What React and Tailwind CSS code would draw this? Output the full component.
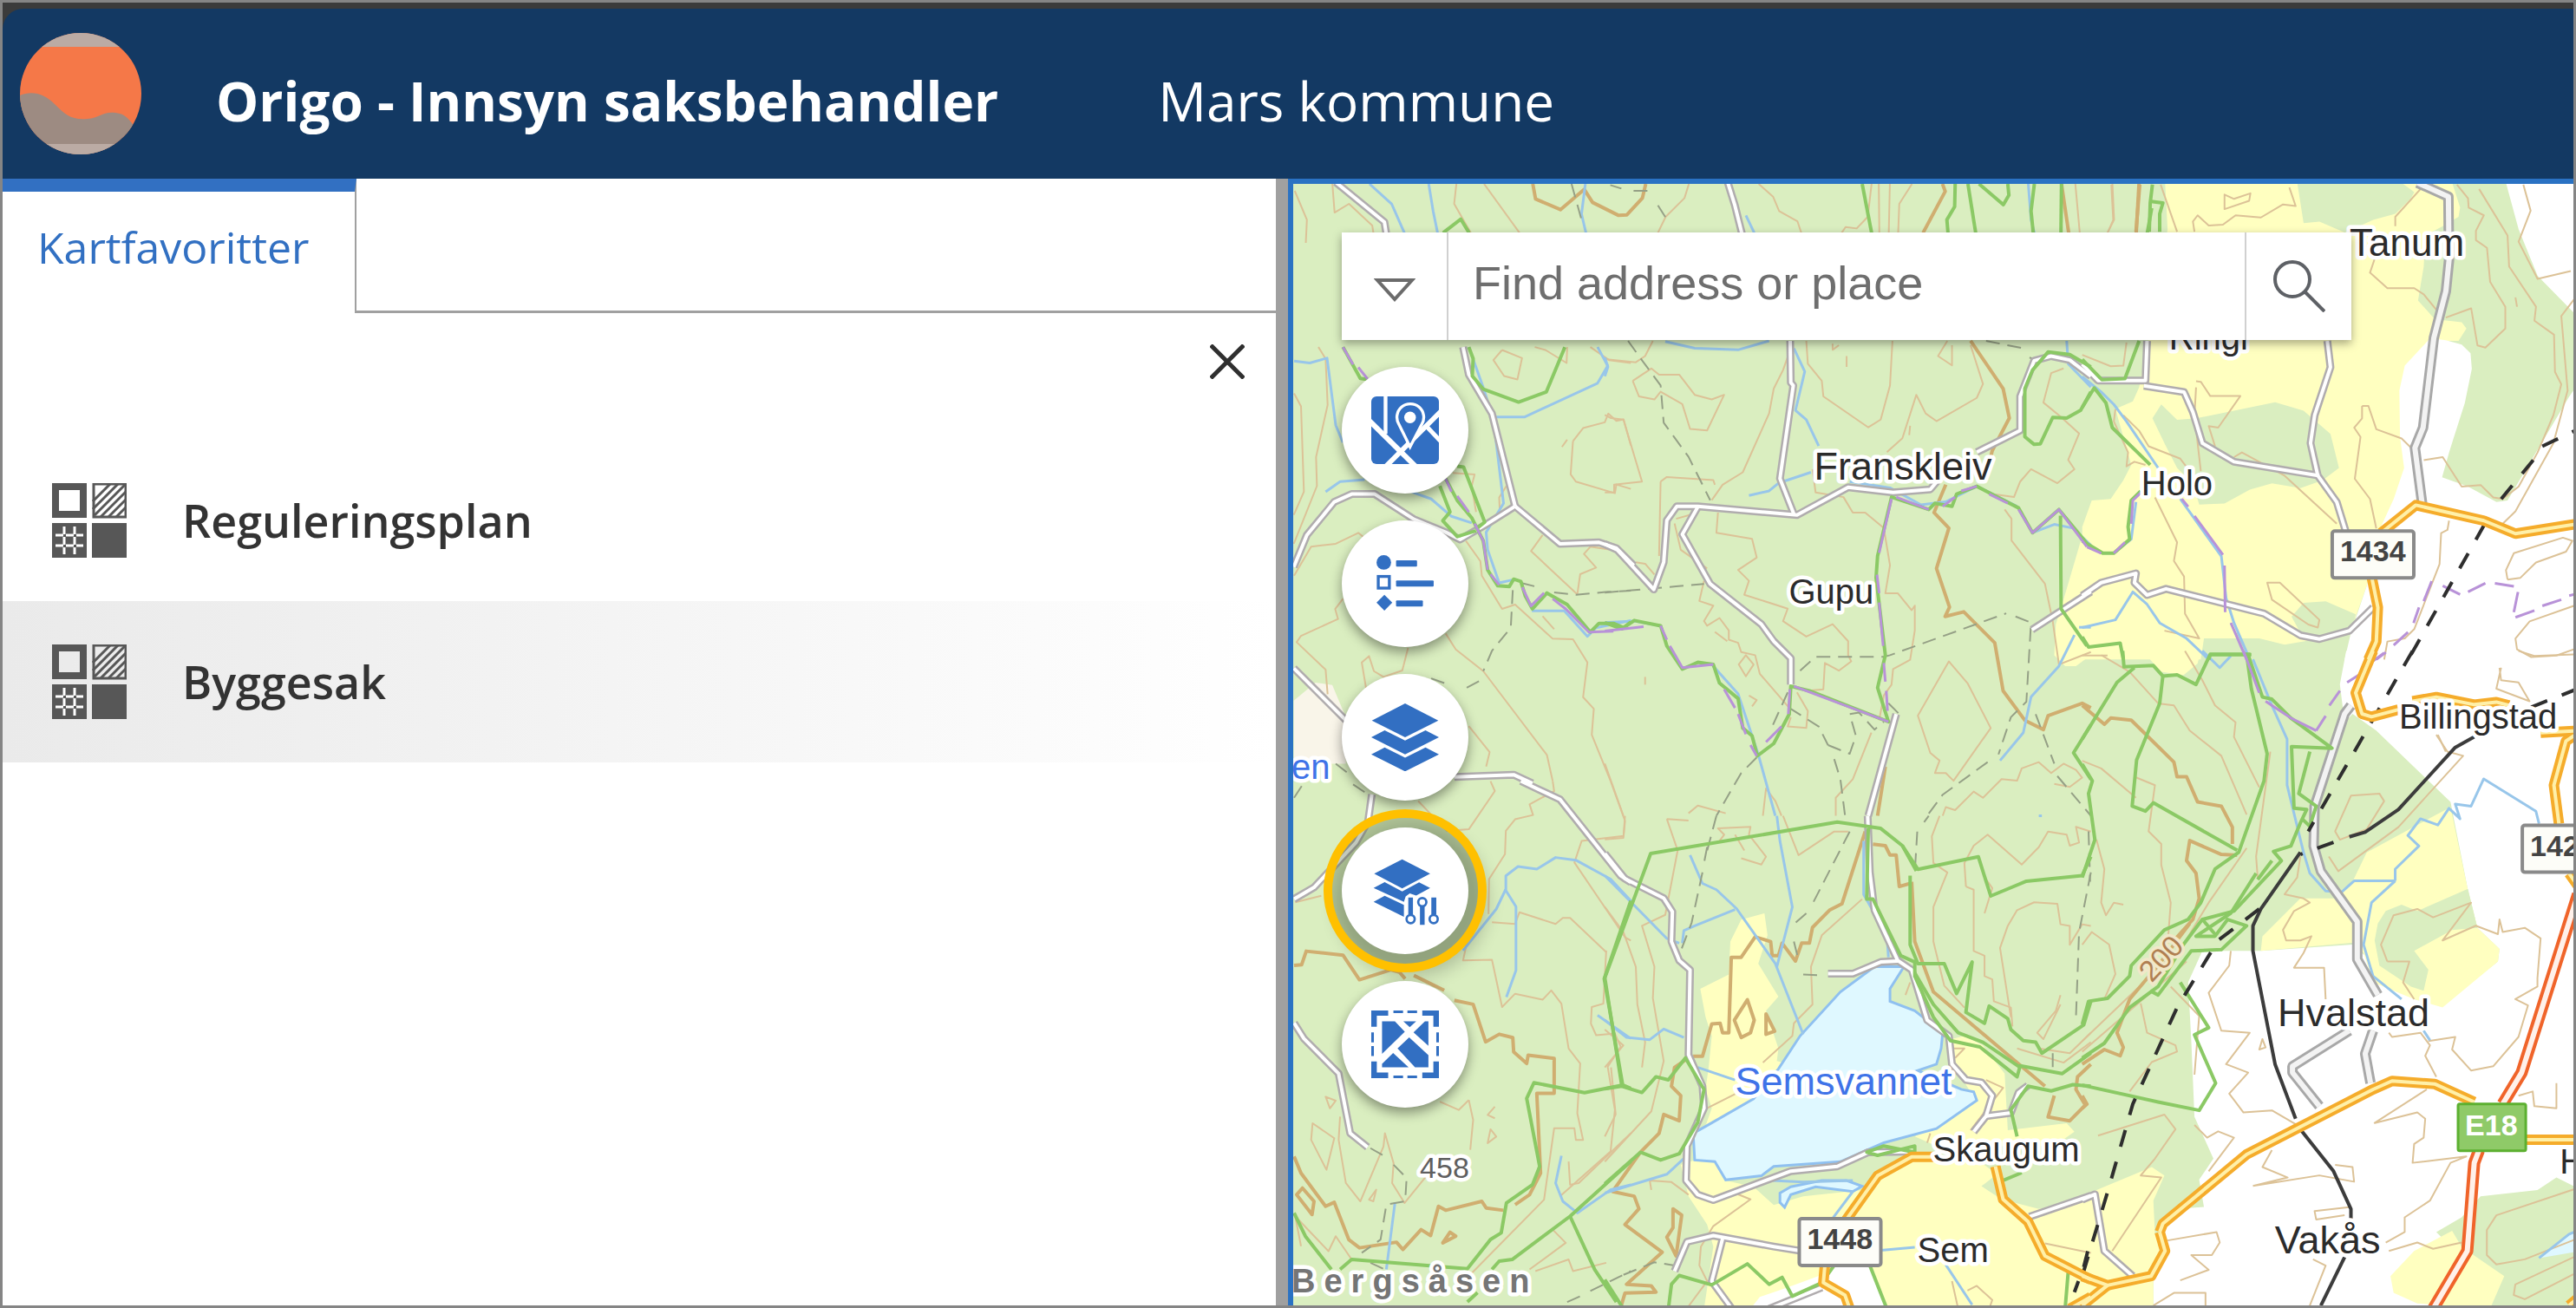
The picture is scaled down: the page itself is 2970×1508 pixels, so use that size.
import { useState } from 'react';

const GREEN = '#daeec0';
const YELLOW = '#ffffc0';
const WHITE = '#ffffff';
const WATER = '#dff8ff';

// Every tile has its own coordinate space and is placed on the map with a transform
const TILES = [
  {
    id: 'north',
    transform: 'translate(1480 200) scale(0.6378 0.3333)',
    areas: [],
    contours: [
      'M20 60 L42 160 40 240', 'M88 36 L92 135 118 105 160 180 165 240', 'M312 36 L308 105 338 205', 'M362 36 L426 205',
      'M732 36 L724 85 690 150 676 205', 'M858 36 L884 80 895 130 928 165 935 205', 'M1062 36 L1055 150 1035 190 1015 185 1008 205',
      'M1075 36 L1076 205', 'M1095 36 L1093 205', 'M1135 36 L1112 105 1110 205', 'M1430 36 L1438 205', 'M1497 36 L1500 160 1488 205',
    ],
    indexContours: ['M450 36 L455 88 500 125 543 55 558 100 605 145 620 143 648 85 654 36', 'M1190 36 L1195 62 1155 205', 'M1405 36 L1418 205', 'M1545 36 L1540 205'],
    streams: ['M155 36 L195 105 218 205', 'M262 36 L270 130 278 205', 'M545 36 L538 140 546 205', 'M835 145 L850 205', 'M1345 36 L1350 160 1356 205'],
    borders: ['M288 205 L320 158 335 205', 'M1045 36 L1062 205', 'M1213 36 L1212 115 1198 160 1200 205', 'M1236 36 L1250 205', 'M1256 36 L1300 108 1310 75 1308 36', 'M1356 36 L1350 130 1354 205', 'M1405 36 L1404 205', 'M1568 120 L1560 205'],
    paths: ['M520 36 L538 160', 'M590 40 L610 52 M632 60 L664 60', 'M676 110 L696 170'],
    roads: ['M94 30 L182 168 188 240', 'M802 30 L815 110 832 240'],
  },
  {
    id: 'northwest',
    transform: 'translate(1480 400) scale(0.3333)',
    areas: [{ d: 'M35 1222 L110 1160 168 1168 215 1280 215 1440 35 1440Z', fill: '#f9f5e9' }],
    contours: [
      'M36 160 L60 205 70 500 35 580', 'M120 0 L145 40 152 200 112 380 115 480 35 680', 'M36 790 L95 690 180 680 258 642 280 660',
      'M205 870 L178 905 188 940 60 998 45 1020 145 1115 152 1200', 'M285 1180 L270 1090 295 1068 312 1120 345 1140 410 1118 430 1040',
      'M755 10 L725 45 762 100 808 112 824 38 755 10', 'M868 0 L905 10 978 55 980 0', 'M1060 0 L1125 45 1200 55',
      'M1000 325 L1035 280 1110 260 1122 230 1150 255 1175 250 1200 340', 'M1000 325 L992 440 1010 465 1145 505 1150 475 1200 490', 'M980 320 L962 345',
      'M895 650 L855 705 1015 855 1025 785 1080 762 1038 715 1060 690 1130 700', 'M630 670 L680 740 685 790 755 905 800 890 930 1008 1000 1010 1050 1090 1035 1210 1072 1250 1065 1340 1130 1500',
      'M560 990 L595 1045 690 1120 910 1410 930 1500', 'M640 1310 L712 1400 700 1450', 'M585 435 L660 440 650 480 665 570', 'M770 480 L745 520 748 590', 'M895 930 L935 975',
    ],
    indexContours: [],
    streams: ['M36 48 L90 55 150 38 180 270 205 330', 'M145 500 L195 465 280 458', 'M730 242 L832 242 1085 125 1120 65 1085 0', 'M640 0 L690 140 725 250 760 540 700 640 705 700 745 815 790 805', 'M440 500 L510 525 580 585 650 608', 'M858 912 L970 912 1050 1000 1080 970 1200 945'],
    borders: [
      'M205 0 L265 108 290 112', 'M640 0 L655 40 652 100 690 145 812 190 908 155 972 0', 'M560 455 L600 530 650 590 690 670 705 770 740 825 780 828 795 802 820 810 835 860 860 905 910 850 980 890 1060 985 1090 955 1140 955 1175 970 1200 950',
      'M540 480 L575 570 550 600 600 655 665 635', 'M600 412 L622 415 695 605 670 625',
    ],
    municipal: ['M205 0 L240 60 M258 70 L290 110', 'M560 455 L580 500 M600 515 L640 570 M660 610 L690 670 705 770 M715 785 L745 822 M825 830 L855 895 900 850 M930 870 L975 905 1055 985 1140 982'],
    paths: ['M820 815 L880 830 M935 848 L1010 856 1120 846 1200 842', 'M792 840 L785 970 720 1050 690 1120 M675 1155 L610 1190', 'M510 1145 L565 1165', 'M180 1440 L225 1475'],
    roads: ['M620 0 L640 95 720 230 800 550', 'M800 550 L955 680 1090 675 1150 695 1210 755', 'M800 550 L705 610 610 665 560 640 450 595 315 508 235 508 175 535 80 650 35 760', 'M35 1110 L215 1290', 'M590 1486 L795 1478 860 1508'],
  },
  {
    id: 'southwest',
    transform: 'translate(1480 900) scale(0.3333 0.3827)',
    areas: [],
    contours: [
      'M465 60 L520 110 565 150 640 145 730 30 715 0', 'M930 0 L935 30 850 70 862 102 800 115 768 150 765 220 710 295 708 400', 'M1130 0 L1180 120 1175 165 1030 180 1005 245 1180 470 1200 480',
      'M720 425 L800 430 815 395 940 430 965 412 990 412 1115 515', 'M640 460 L620 540 720 538 755 680 800 640 895 658 925 630 960 670 985 805 1025 850 1015 1000 1030 1060 1035 1080 1010 1080 1005 1045 935 1045 900 1260 640 1490',
      'M40 365 L130 345', 'M1115 510 L1105 670 1065 680 1062 730 1080 765 1145 760 1165 800 1120 860 1145 990 1130 1115 955 1250', 'M195 1010 L190 1080 215 1210 265 1265 345 1100 350 1060 380 1150 375 1210 418 1270 520 1160',
      'M145 950 L180 962 160 985Z', 'M100 1030 L175 1075 148 1170 95 1080Z', 'M640 960 L605 990 540 965', 'M640 960 L655 1020 645 1110', 'M705 1090 L715 1048 735 1070Z M730 980 L705 1005 730 1015', 'M295 1260 L320 1230 310 1265Z',
      'M985 1145 L990 1215 1020 1210 1200 1060', 'M60 1400 L40 1310 155 1415 180 1370 235 1440', 'M850 1470 L975 1390 930 1350', 'M870 1475 L985 1440 1000 1475 1115 1450',
    ],
    indexContours: [
      'M36 555 L62 553 78 512 205 524 262 598 370 568 400 575 420 595', 'M450 585 L555 630 M590 660 L655 672 698 785 745 762 792 772 795 815 840 850 845 825 935 835 935 940 875 940 888 1180 850 1245 800 1275',
      'M36 1130 L60 1180 145 1280 175 1268 225 1380 262 1405 390 1388 412 1410 475 1350 508 1368 535 1280 560 1292 685 1265 700 1285 760 1292', 'M45 1245 L65 1225 105 1265 98 1305Z', 'M550 1390 L575 1358 595 1370Z',
    ],
    streams: ['M620 510 L735 385 768 325 768 285 810 257 875 265 940 230 1010 238 1130 295 1200 360', 'M765 325 L803 378 803 570 770 650', 'M385 1268 L355 1470', 'M960 1128 L940 1210 965 1265 1015 1300 1130 1230 1200 1215', 'M1085 705 L1200 775'],
    borders: ['M1200 360 L1108 595 1172 915 1200 925', 'M1172 915 L1040 938 865 908 840 955 885 1160 860 1215 770 1270 752 1360 715 1380 635 1468 235 1440 195 1470', 'M36 1300 L75 1370 165 1470', 'M720 1470 L745 1445 790 1440 990 1310 1200 1145', 'M990 1310 L1075 1470 1150 1568', 'M635 1568 L670 1540'],
    paths: ['M240 10 L300 45', 'M36 50 L70 5', 'M300 1105 L350 1130 M380 1155 L425 1195 420 1265 355 1275 335 1380 270 1420', 'M1060 1535 L1200 1475', 'M980 1568 L1040 1545', 'M300 1450 L350 1470'],
    roads: ['M305 40 L292 120 250 185 105 320 36 355', 'M36 728 L70 775 190 880 230 1060 290 1102', 'M820 0 L955 55 1165 285 1200 305'],
  },
  {
    id: 'centre',
    transform: 'translate(1850 380) scale(0.3571)',
    areas: [{ d: 'M1568 565 L1530 700 1480 870 1455 950 1450 1050 1485 1085 1520 1085 1575 1045Z', fill: YELLOW }],
    contours: [
      'M155 36 L130 85 100 105 0 95', 'M90 165 L150 125 175 145 240 145 290 210 345 225 385 210 330 325 275 320 250 240 180 200 160 225 110 215 90 165', 'M0 275 L20 285 60 290 120 490 30 500 30 525 0 525',
      'M600 60 L575 130 545 190 530 270 445 460 380 500 345 550', 'M180 490 L200 475 350 485 355 500 M180 490 L175 730', 'M650 36 L655 110 700 165 705 215 850 315 890 290 920 180 928 36', 'M1105 36 L1075 85 1120 115 1120 50',
      'M1180 50 L1220 175 1200 220 1070 295 1035 270 1005 210 960 350 910 395', 'M780 85 L780 120', 'M985 310 L982 340', 'M670 450 L680 525 770 540 800 590 840 590 900 640 920 760 905 850 945 850 990 905 1000 890 1000 970 985 1065 930 1095 925 1145 900 1180 885 1260',
      'M365 590 L360 655 475 675 490 735 430 775 465 810 450 855 560 890 590 900 575 940 650 990 735 950 785 1005 785 1050 795 1070 755 1100 710 1075 705 1160 650 1165', 'M320 810 L305 875 350 890 320 940 330 955 370 930 400 970 400 1000 430 1010 440 1040 485 1050 500 1110 595 1220',
      'M455 1050 L480 1080 455 1118 432 1080Z', 'M355 975 L395 1005', 'M465 1180 L490 1195 475 1215', 'M130 1120 L130 1145', 'M1110 1070 L1170 1140 1245 1285 1125 1455 1100 1430 1065 1430 1080 1390 1050 1365 1010 1245Z',
      'M1090 1568 L1100 1540 1130 1550 1190 1490 1220 1510 1280 1450 1330 1455 1345 1415 1400 1395 1440 1430 1480 1400 1520 1420 1540 1445 1500 1475 1450 1465', 'M860 1300 L800 1450 745 1510 745 1568',
      'M1480 125 L1440 140 1415 235 1470 280 1530 335 1495 420 1515 450 1460 495 1375 450 1340 490 1320 540 1250 530', 'M1290 580 L1312 610 1312 680 1420 820 1445 940 1465 1080 1568 1040', 'M230 610 L300 590 M225 625 L245 710 330 770', 'M100 750 L130 755 160 790', 'M0 1400 L60 1568', 'M270 1560 L300 1535 390 1560', 'M510 1568 L520 1480 550 1520 570 1568', 'M600 1250 L590 1280 650 1285 655 1230 620 1170', 'M735 45 L735 65 755 50',
    ],
    indexContours: ['M1180 36 L1285 190 1305 285 1250 390 1245 410', 'M1100 500 L1062 590 1110 640 1070 770 1112 895 1098 925 1158 910 1258 1010 1285 1165 1355 1260 1415 1290 1430 1245 1540 1205 1568 1220', 'M905 1410 L880 1568'],
    streams: ['M195 38 L290 60 430 65 530 36', 'M610 60 L645 135 615 260 650 290 690 375', 'M465 535 L530 520 560 495 665 460', 'M0 945 L95 940 180 955', 'M345 1080 L430 1175 495 1370 550 1568', 'M790 490 L920 510 1020 565 1100 555 1200 505 1330 570', 'M1380 655 L1450 628 1510 640 1568 695', 'M1490 36 L1495 110 1568 185', 'M1568 960 L1530 960', 'M1515 985 L1465 1085 1375 1185 1350 1300 1275 1390', 'M0 90 L10 120 0 150'],
    borders: [
      'M0 945 L55 965 95 938 180 955 200 1020 250 1095 300 1073 350 1080 370 1140 430 1190 445 1285 475 1310 492 1375 545 1335 595 1240 600 1150 660 1165 915 1265 880 1155 905 1050 875 800 880 730 925 540 1045 580 1065 560 1120 570 1135 530 1200 505 1335 575 1380 655 1465 580 1568 705',
      'M1568 120 L1500 80 1430 72 1380 130 1355 190 1355 345 1385 370 1405 368 1445 283 1490 285 1535 260 1568 200', 'M1470 600 L1472 900 1555 1020', 'M1568 1275 L1512 1365 1568 1450',
    ],
    municipal: ['M0 972 L125 958 M180 955 L200 1000 M210 1020 L250 1090 350 1080 M385 1160 L420 1220 M430 1240 L455 1305 M470 1340 L490 1375 M520 1330 L570 1280 M592 1240 L597 1160 M610 1150 L915 1265 M912 1230 L908 1165 M905 1135 L900 1075 M898 1020 L885 880 M885 850 L878 790 M885 720 L925 545 M940 540 L1045 580 M1090 570 L1130 540 M1150 520 L1200 505 M1240 530 L1300 560 M1335 580 L1380 655 1465 580 1555 700'],
    paths: ['M75 36 L110 85 180 180 190 300 270 410 325 520 340 550', 'M0 848 L230 828 320 820', 'M630 1100 L680 1055 900 1055 920 1050 1295 915', 'M1325 925 L1375 945 1360 1200 1310 1250 1270 1370', 'M590 1170 L540 1280 M595 1220 L690 1280 720 1340 M740 1385 L760 1450 775 1568', 'M490 1380 L440 1430 360 1568', 'M720 1340 L790 1368 810 1310 790 1240 820 1235 870 1290 900 1265', 'M1235 1395 L1090 1500 1040 1568', 'M1390 1240 L1450 1400 M1460 1440 L1568 1568', 'M1230 36 L1350 60 M1370 90 L1400 100', 'M915 1205 L950 1240'],
    roads: ['M598 36 L600 170 608 180 565 480 610 595', 'M0 692 L40 710 158 838 190 750 200 615 232 570 300 570 620 598 785 508 930 525 1050 515 1080 480', 'M300 572 L250 660 340 820 505 950 545 1005 600 1060 600 1145', 'M1200 395 L1340 325 1340 215 1385 100 1440 85 1500 98 1568 150', 'M940 1240 L850 1568', 'M1378 968 L1568 845'],
  },
  {
    id: 'northeast',
    transform: 'translate(2400 200) scale(0.3643 0.3571)',
    areas: [
      { d: 'M262 30 L1170 30 1195 110 1190 140 1140 170 1085 200 1080 300 1062 410 1115 470 1200 480 1215 500 1190 540 1100 540 1030 610 1020 1000 940 1150 900 1330 865 1430 840 1485 640 1520 560 1500 385 1500 375 1568 0 1568 0 1140 30 1055 90 1050 130 990 155 940 105 760 160 735 180 690 210 540 270 180Z', fill: YELLOW },
      { d: 'M1340 30 L1380 180 1440 330 1560 455 1580 470 1580 30Z', fill: WHITE },
      { d: 'M1100 532 L1150 538 1200 552 1228 580 1232 630 1210 740 1160 900 1138 980 1220 1010 1310 1060 1345 1055 1400 960 1470 840 1540 720 1580 660 1580 1568 830 1568 850 1480 870 1420 900 1330 940 1150 985 1050 1018 950 1005 850 1003 700 1020 620Z', fill: WHITE },
      { d: 'M680 30 L1010 30 1050 60 1040 80 990 130 920 150 830 190 750 155 700 160Z', fill: GREEN },
      { d: 'M250 745 L300 795 360 790 480 765 610 738 700 765 785 840 812 950 760 990 690 1015 600 1000 530 1020 450 1065 370 1068 350 1000 300 950 260 870 222 790Z', fill: GREEN },
      { d: 'M662 1430 L700 1385 770 1380 865 1422 850 1480 780 1510 700 1500Z', fill: GREEN },
    ],
    contours: [
      'M92 36 L98 150 82 188', 'M248 36 L300 188', 'M450 68 L480 82 532 64 528 88 450 115Z', 'M355 188 L350 155 365 135 400 168 445 165 485 135 565 142 635 100 675 105 655 45', 'M1070 50 L990 140 990 170',
      'M1185 36 L1220 80 1222 110 1270 135 1245 185 1245 215 1280 240 1290 350 1338 430 1338 500 1275 562 1250 555 1230 435 1150 465', 'M1255 50 L1345 200 1350 300 1435 430 1430 475 1492 520 1495 640 1515 680 1490 780 1440 900 1380 1010 1330 1050 1300 1045 1260 1005 1200 1010 1140 915 1080 925',
      'M1395 36 L1418 120 1380 220 1440 340 1545 315', 'M1560 400 L1515 460 1535 700 1490 870 1370 1090 1330 1130', 'M1370 400 L1375 430', 'M925 275 L910 320 965 370 1050 370 1080 390 1120 440', 'M360 670 L375 672 405 718 500 718 430 820 400 815 420 880', 'M360 690 L355 780 375 960', 'M885 750 L905 750 930 825 1010 855 1040 885 M885 750 L885 790 860 820 880 850 862 985 910 1050 930 1145',
      'M480 915 L505 900 640 975 805 1130', 'M130 780 L180 830 210 880 310 920 340 960', 'M105 760 L100 800 145 900 140 945 165 930 200 940', 'M230 1045 L300 1190 290 1250 322 1300 325 1420 370 1500 260 1475', 'M585 1320 L625 1320 750 1440 745 1465 715 1455 600 1375Z',
      'M1160 1120 L1155 1150 1135 1160 1130 1260 1050 1470 1020 1500 965 1510 955 1568', 'M1345 1310 L1340 1280 1365 1225 1520 1175 1550 1185 1530 1220 1435 1255 1385 1305 1345 1310', 'M1568 1390 L1415 1445 1370 1500 1375 1535 1420 1560 1500 1555 1568 1530', 'M0 585 L90 622 130 620 140 545', 'M490 1480 L530 1568', 'M0 1555 L80 1555',
    ],
    indexContours: ['M182 36 L170 188'],
    streams: ['M0 655 L60 705 100 745 140 800 240 950', 'M310 1050 L440 1235 455 1370 480 1450 530 1568', 'M170 1060 L155 1180 100 1225', 'M0 1465 L105 1440 160 1350 205 1390 245 1450 330 1500 400 1568'],
    borders: ['M222 36 L215 95 212 188', 'M218 90 L255 95 245 130 245 188', 'M180 540 L135 662 62 665 0 600', 'M0 755 L38 692 75 740 95 820 215 940', 'M185 1025 L155 1055 145 1140 150 1180 100 1225 65 1225 0 1185', 'M0 1495 L20 1528 120 1515 130 1568', 'M400 1568 L405 1552 535 1552'],
    municipal: ['M185 1030 L160 1055 155 1130 M135 1190 L100 1225 M60 1225 L15 1205', 'M315 1050 L335 1075 M355 1105 L445 1230 M450 1265 L452 1415 M470 1450 L520 1568', 'M1105 1315 L1080 1380 M1065 1400 L1048 1450 M1030 1480 L985 1522 M960 1545 L930 1568', 'M1140 1330 L1195 1358 M1220 1350 L1275 1322 M1305 1322 L1365 1332 M1378 1350 L1365 1415 M1370 1432 L1430 1410 M1455 1395 L1515 1375 M1540 1362 L1568 1355'],
    roads: ['M775 540 L785 625 735 780 722 870 745 975 805 1060 835 1160', 'M195 685 L322 705 350 770 380 870 480 930 750 975', 'M0 615 L50 668 200 668 205 540', 'M0 1362 L60 1320 170 1290 165 1320 205 1360 265 1340 575 1420 690 1490 750 1502 845 1475 920 1400'],
    mainRoads: ['M1060 30 L1158 75 1160 280 1150 380 1112 530 1078 820 1052 885 1075 1065'],
    countyRoads: ['M945 1160 L1055 1070 1270 1120 1370 1162 1568 1130', 'M915 1300 L935 1400 930 1510 905 1568'],
    railTunnels: ['M1040 1552 L1290 1100', 'M1325 1050 L1430 920', 'M1455 880 L1568 825'],
  },
  {
    id: 'southeast',
    transform: 'translate(2400 750) scale(0.3642 0.4834)',
    areas: [
      { d: 'M835 0 L815 80 830 170 855 150 930 190 1165 360 1220 570 1250 660 1320 710 1315 740 1140 845 1050 830 855 700 565 715 380 715 335 790 345 930 355 1110 415 1210 370 1260 385 1325 300 1330 250 1370 225 1500 225 1568 1580 1568 1580 0Z', fill: WHITE },
      { d: 'M855 550 L900 480 1165 372 1220 570 1250 660 1320 710 1315 740 1140 850 1050 830 920 790 890 720 860 695 565 715 570 680 690 590 830 590 820 570Z', fill: YELLOW },
      { d: 'M935 650 L960 620 1010 605 1060 620 1220 567 1250 660 1170 665 1050 715 1095 760 1080 810 1040 800 940 750 925 690Z', fill: GREEN },
      { d: 'M1120 1385 L1200 1350 1260 1300 1440 1285 1500 1255 1580 1285 1580 1568 1220 1568 1180 1430Z', fill: GREEN },
      { d: 'M975 1490 L1050 1430 1170 1382 1200 1420 1335 1490 1290 1568 1060 1555 985 1530Z', fill: YELLOW },
      { d: 'M190 0 L250 50 320 58 365 30 375 0Z', fill: YELLOW },
      { d: 'M0 1300 L60 1280 220 1230 260 1250 225 1310 230 1390 250 1400 225 1500 225 1568 0 1568Z', fill: YELLOW },
      { d: 'M1445 1447 L1540 1390 1580 1380 1580 1430Z', fill: WATER },
    ],
    contours: [
      'M60 10 L150 50 240 125 290 130 340 190 440 250 520 390', 'M325 0 L380 70 420 130 485 170 480 205 560 325', 'M0 262 L60 280 170 350 M165 300 L230 320 210 430 250 460 250 510 280 600 270 700', 'M45 450 L70 520 60 600 75 630 100 600 130 605 M0 700 L30 670 85 700 105 770 70 830',
      'M595 240 L550 490 555 540', 'M850 345 L940 340 955 358 900 425 815 450 800 430Z', 'M1120 200 L1155 240 1205 250 1000 420 810 525 780 490', 'M690 490 L680 540 640 580 700 590 720 600 670 620 635 665 645 690 690 690 725 680 700 720 670 755 765 755 770 830',
      'M965 740 L945 700 985 630 1060 615 1110 635 1230 600 1140 690 1245 655 1315 675 1320 640 1330 670 1400 660 1450 685 1440 780 1440 800 1370 830 1410 845 1380 920 1300 990 1230 1000 1170 950 1180 920 1095 930 M965 740 L1035 740 1015 790 1050 830', 'M470 715 L465 750 400 815 440 905 530 910 455 985 525 1005 465 1055 510 1100 600 1095 680 1130',
      'M355 1010 L370 870 280 800', 'M570 925 L580 945 560 950Z', 'M970 910 L980 920 1070 910 1100 940 1085 965 1120 1015', 'M1090 1045 L925 1125 1060 1100 1085 1115 1080 1160 1050 1175 1045 1220 1215 1205 1165 1220 1100 1310 1020 1350 1020 1385 960 1410',
      'M50 1155 L260 1105 295 1140 230 1210 185 1250 250 1255 95 1430', 'M355 1130 L395 1160 430 1145 480 1160 400 1240', 'M540 1275 L650 1255 570 1230 600 1190 M540 1275 L750 1250 860 1265 855 1230 800 1225', 'M850 1325 L735 1335 740 1355 830 1345', 'M270 1405 L425 1385 435 1410 410 1440 345 1440 400 1475 310 1500 M225 1560 L290 1530 390 1530 390 1560', 'M730 1450 L770 1465 720 1560', 'M970 1430 L1060 1410 1110 1425 1200 1410',
      'M1568 1280 L1310 1345 1280 1380 1280 1440 1310 1462 1400 1450 1568 1400', 'M1568 1440 L1370 1510 1365 1535 1400 1545 1568 1480', 'M1380 1060 L1425 1050 1430 1085 1500 1090 1500 1030', 'M1320 40 L1325 70 1380 75 1415 120 1310 90 1325 40', 'M1380 0 L1430 12 1568 8', 'M185 840 L205 910 295 940 300 955 220 980 150 1050', 'M0 930 L320 700 400 600 520 470', 'M0 955 L330 740', 'M1125 200 L1150 240',
    ],
    indexContours: ['M0 130 L70 175 90 160 155 165 290 265 300 300 330 300 365 360 440 370 475 420 475 460', 'M490 487 L440 485 340 452 330 500 360 530 370 590 350 640 290 690', 'M0 985 L70 950 120 965 130 945 110 910 150 830 250 740 340 650', 'M0 1060 L15 1080 0 1090'],
    streams: ['M380 0 L435 40 470 12', 'M540 20 L600 130 648 210 648 320 700 480 720 530 770 572 820 575 860 548 990 548', 'M990 548 L915 600 900 660 890 700 920 775 1010 830', 'M1080 905 L1100 928', 'M990 548 L990 520 1065 465 1030 440 1070 400 1125 415 1160 375 1195 400 1180 365 1230 370 1270 305 1435 382 1445 412', 'M1445 1447 L1540 1390 1568 1382'],
    borders: [
      'M128 0 L132 38 225 35 255 60 300 57 360 80 405 8 532 8', 'M165 40 L110 75 0 210', 'M255 60 L245 125 172 260 158 370 200 382 225 362 490 475', 'M520 8 L535 90 585 245 575 310 495 480 420 520 375 600 335 640 260 665 155 750 150 775 80 828 20 835 0 890',
      'M0 270 L32 310 20 340 40 450 0 540', 'M525 10 L570 110 600 115 660 160 790 232 662 228 670 375 710 378 690 410 660 465 605 478 630 500 480 620 380 640 320 700 240 800 150 850 70 935 0 970', 'M720 240 L685 340 740 370 720 418 695 400', 'M550 530 L470 625 360 680 420 680 460 640 520 655 440 712 345 715 240 820 215 810', 'M380 640 L420 675 M600 500 L555 545 M310 790 L400 898 355 915 422 1030 370 1095 240 1075 0 1035',
    ],
    municipal: ['M510 0 L560 100 M580 120 L660 160 740 190', 'M740 190 L770 155 M782 130 L815 95 M838 75 L880 55 M900 35 L955 5'],
    paths: ['M20 430 L25 550'],
    roads: ['M0 1308 L40 1295 70 1430 160 1490'],
    mainRoads: ['M850 130 L830 150 735 370 732 465 755 525 870 645 870 735 935 820', 'M920 905 L895 960 912 1030', 'M845 905 L665 990 665 1005 750 1085'],
    countyRoads: ['M920 0 L865 100 885 150 915 157 1000 140', 'M1045 120 L1120 110 1240 128 1310 122 1350 130 M1450 195 L1580 190', 'M1580 190 L1530 215 1492 320 1508 412', 'M1540 530 L1568 560', 'M245 1385 L262 1430 218 1490 80 1512 0 1490 M245 1385 L255 1365 520 1200 920 1045 980 1025 1115 1032 1240 1075', 'M1400 1165 L1580 1165', 'M0 1560 L80 1512', 'M1540 1560 L1580 1535'],
    motorways: ['M1568 580 L1390 1005 1330 1080', 'M1255 1190 L1240 1220 1218 1430 1110 1568'],
    rails: ['M1240 205 L1180 230 1000 378 895 432 845 443', 'M690 480 L565 615 540 655 540 715 610 985 675 1115', 'M690 1140 L795 1240 850 1330 850 1355', 'M830 1445 L755 1560'],
    railTunnels: ['M1045 0 L715 430', 'M1568 90 L1400 140', 'M795 456 L690 485', 'M560 615 L430 690 300 850 160 1080 80 1290 0 1490'],
  },
  {
    id: 'lake',
    transform: 'translate(1850 940) scale(0.3571 0.3622)',
    areas: [
      { d: 'M440 330 L515 310 525 380 495 470 560 575 520 620 560 740 555 780 600 790 560 830 480 910 320 1000 345 930 325 870 335 800 345 700 325 640 308 550 400 505 405 400Z', fill: YELLOW },
      { d: 'M245 1110 L290 1095 355 1100 390 1160 480 1180 545 1238 640 1210 830 1190 880 1130 1000 1070 1210 1100 1265 1140 1215 1178 1280 1220 1400 1250 1568 1222 1568 1568 320 1568 350 1370 330 1300 270 1210Z', fill: YELLOW },
      { d: 'M1100 715 L1160 700 1220 730 1290 820 1300 1000 1490 978 1515 1005 1450 1050 1070 1050 1000 1020 1200 910 1130 800Z', fill: YELLOW },
      { d: 'M470 1568 L500 1530 590 1500 700 1460 740 1430 860 1430 910 1568Z', fill: WHITE },
      { d: 'M740 1100 L870 1060 980 1060 980 1080 880 1130 830 1185 560 1170 500 1180 600 1130Z', fill: GREEN },
    ],
    lakes: [
      'M870 480 L965 480 920 550 920 590 1000 620 1090 690 1085 740 1070 790 1010 810 1150 870 1190 878 1200 905 1070 995 900 1040 760 1100 545 1115 505 1145 390 1158 355 1100 290 1095 285 1010 330 985 480 900 560 805 630 700 760 560Z',
      'M565 1200 L600 1180 700 1160 780 1160 830 1178 800 1195 680 1180 600 1205 580 1245 565 1230Z',
    ],
    contours: [
      'M65 0 L60 70 0 75', 'M200 10 L270 15 M200 10 L235 110 195 315 120 350 160 480 155 580 190 780 150 940 0 1100', 'M370 80 L385 60 365 40 470 35 465 60 520 130 505 155 440 135 M420 60 L450 110', 'M575 0 L625 125 740 50 785 50',
      'M830 265 L700 380 665 480 670 600 610 660 605 700 510 785', 'M1080 0 L1055 65 1060 150 1105 180 1060 290 1060 400 1095 540 1160 610', 'M1165 225 L1160 150 1190 95 1235 60 1345 155 1400 100 1430 50 1490 60 1500 95 1530 85 1520 35 1568 50', 'M1165 225 L1190 235 1190 430 1225 445 1225 510 1250 520 1255 590 1310 610 1315 670',
      'M1225 310 L1250 230 1225 195', 'M1310 640 L1275 420 1300 350 1330 300 1385 275 1460 280 1470 345 1500 350 1500 410 1540 345 1568 350', 'M1470 570 L1455 620 1395 690 1415 710 1470 600', 'M0 290 L60 370 100 480 105 600 130 720 120 800', 'M0 680 L60 730 0 800', 'M20 800 L35 950 0 1020', 'M330 930 L420 885', 'M150 1190 L145 1160 215 1165 270 1205 M420 1200 L470 1220 350 1305 310 1370 305 1430 330 1480 270 1560',
      'M1120 740 L1160 740 1130 770 M1230 840 L1285 865 1180 1000 M1040 1040 L1050 1010', 'M1420 1360 L1568 1390', 'M1120 1480 L1140 1568 M1170 1510 L1200 1495 1250 1540 1240 1568', 'M1330 740 L1480 785 1568 720', 'M1400 740 L1500 755 1568 690', 'M985 530 L970 570',
    ],
    indexContours: [
      'M840 50 L765 280 725 300 670 355 660 405 635 405 615 462 572 405 560 445 540 445 535 400 485 385 440 450 408 450 400 690 380 690 372 660 345 662 315 765 285 765', 'M460 585 L418 650 440 705 470 690 482 650Z', 'M520 630 L548 685 520 695Z', 'M865 90 L905 95 920 125 940 125 950 225 985 215',
      'M990 210 L1000 400 1060 560 1420 860', 'M270 770 L225 800 215 860 245 890 240 970 190 950 175 1010 115 1070 25 1195 95 1210 110 1250 65 1300 185 1388 70 1490 150 1495 165 1515 65 1518 50 1568', 'M220 1250 L248 1270 230 1400 200 1340 220 1310Z', 'M1568 790 L1525 830 1520 870 1550 920 1500 970 1430 958 1450 890',
    ],
    streams: ['M0 190 L90 280 200 390 240 405', 'M275 125 L315 215 360 235 425 295 550 470 640 695', 'M250 405 L255 365 290 350 420 298', 'M555 0 L565 80 605 290 555 480', 'M0 650 L70 705 145 712 190 678 255 705', 'M300 800 L420 840', 'M0 1200 L200 1140 255 1090', 'M540 1160 L640 1165 800 1160', 'M800 1195 L735 1280', 'M835 80 L835 250 910 380 915 450', 'M890 1382 L1000 1372', 'M1100 1428 L1185 1555', 'M1400 0 L1410 0'],
    borders: [
      'M0 515 L148 120 750 20 890 40 960 95 1005 175 M850 40 L845 265 865 265 955 445 1000 465 1000 510 1060 640 1115 715 1210 735 1330 830 1340 795 1475 820 1568 755', 'M0 515 L55 860 120 880 165 830 205 840 260 770 320 870 300 975 240 1075 180 1095 115 1070 0 1170', 'M0 868 L55 860',
      'M960 95 L1010 170 1205 130 1245 255 1360 208 1540 190 1568 130', 'M985 190 L985 410 1010 470 1095 470 1135 565 1185 465 1165 625 1225 660 1240 605 1300 645 1310 680 1350 715 1390 720 1410 755 1545 665 1568 590', 'M1000 500 L1060 600 1140 690 1220 720 1340 800', 'M845 1070 L880 1080 1000 1050 1000 1070 900 1050Z', 'M1330 1020 L1310 935 1365 860 1440 875 1510 855 1568 860', 'M1345 1135 L1260 1170',
      'M205 1568 L215 1490 240 1462 345 1492 460 1425 530 1490 572 1468 605 1528 700 1485 740 1430', 'M855 1430 L910 1568', 'M1265 1130 L1265 1175 1285 1220 1360 1280 1430 1400 1495 1450 1485 1568', 'M0 1475 L60 1568',
    ],
    paths: ['M360 0 L325 130 M330 100 L320 150 M315 180 L280 340 245 430', 'M790 50 L670 280 M650 310 L615 340 M610 400 L625 460', 'M640 505 L705 508', 'M1045 0 L1030 20 M1008 50 L1000 180', 'M1568 180 L1530 370 1520 640', 'M1445 755 L1445 800', 'M60 1460 L160 1420 225 1430'],
    roads: [
      'M0 120 L65 200 190 262 218 305 215 400 240 460 275 490 270 760 315 860 320 930 265 1050 262 1160 300 1205 350 1222 600 1130 750 1115 850 1070 980 1068', 'M848 0 L855 180 870 300 945 460 990 490 1040 650 1110 700 1120 790 1165 840 1215 848 1250 890 1230 955 1190 1005', 'M1230 955 L1310 945 1335 880 1365 858', 'M720 502 L800 502 890 465 945 462',
      'M225 1448 L265 1355 350 1335 545 1370 640 1385', 'M380 1345 L345 1480 410 1568', 'M530 1568 L700 1500', 'M1370 1275 L1568 1208',
    ],
    countyRoads: ['M775 1290 L880 1145 990 1085 1060 1085', 'M1260 1115 L1285 1220 1365 1290 1420 1400 1568 1475', 'M710 1430 L705 1485 775 1525 790 1568', 'M1500 1568 L1568 1530'],
    railTunnels: ['M1558 1385 L1545 1435', 'M1528 1480 L1515 1515'],
  },
];

const STROKES = [
  { layer: 'contours', color: '#dcc297', width: 2 },
  { layer: 'indexContours', color: '#d0ae70', width: 4 },
  { layer: 'streams', color: '#98c6ea', width: 3 },
  { layer: 'paths', color: '#95a086', width: 2, dash: '16 9' },
  { layer: 'roads', color: '#b0acae', width: 9 },
  { layer: 'roads', color: '#ffffff', width: 4 },
  { layer: 'mainRoads', color: '#a8a8a8', width: 12 },
  { layer: 'mainRoads', color: '#f3f3f3', width: 6 },
  { layer: 'borders', color: '#8bc965', width: 4 },
  { layer: 'municipal', color: '#b892d8', width: 3 },
  { layer: 'rails', color: '#3c3c3c', width: 4 },
  { layer: 'railTunnels', color: '#2e2e2e', width: 4, dash: '20 18' },
  { layer: 'countyRoads', color: '#f5ac2b', width: 12 },
  { layer: 'countyRoads', color: '#fff0a8', width: 4 },
  { layer: 'motorways', color: '#f0642a', width: 14 },
  { layer: 'motorways', color: '#fff1ea', width: 6 },
];

const PLACES = [
  { name: 'Tanum', x: 2708, y: 295, size: 44 },
  { name: 'Ringi', x: 2500, y: 403, size: 40 },
  { name: 'Franskleiv', x: 2091, y: 553, size: 45 },
  { name: 'Holo', x: 2468, y: 571, size: 40 },
  { name: 'Gupu', x: 2062, y: 696, size: 40 },
  { name: 'Billingstad', x: 2765, y: 840, size: 40 },
  { name: 'Hvalstad', x: 2625, y: 1182, size: 45 },
  { name: 'Skaugum', x: 2228, y: 1338, size: 40 },
  { name: 'H', x: 2950, y: 1352, size: 40 },
  { name: 'Vakås', x: 2622, y: 1444, size: 45 },
  { name: 'Sem', x: 2210, y: 1454, size: 40 },
  { name: 'en', x: 1489, y: 897, size: 40, color: '#3f73e8' },
  { name: 'Semsvannet', x: 2000, y: 1261, size: 45, color: '#3f73e8' },
  { name: '458', x: 1637, y: 1357, size: 34, color: '#5f5f5f' },
];

const SHIELDS = [
  { name: '1434', x: 2688, y: 612 },
  { name: '1448', x: 2074, y: 1404 },
  { name: '142', x: 2907, y: 951 },
];

function MapCanvas() {
  return (
    <svg
      className="absolute inset-0 h-full w-full bg-[#daeec0] font-['Liberation_Sans',Arial,sans-serif]"
      viewBox="1491 212 1476 1292"
      preserveAspectRatio="xMinYMin slice"
      role="img"
      aria-label="Kart"
    >
      {TILES.map((tile) => (
        <g key={tile.id} transform={tile.transform}>
          {tile.areas.map((area) => (
            <path key={area.d} d={area.d} fill={area.fill} />
          ))}
          {(tile.lakes || []).map((d) => (
            <path key={d} d={d} fill={WATER} stroke="#8fc0f0" strokeWidth="3" vectorEffect="non-scaling-stroke" />
          ))}
        </g>
      ))}

      {STROKES.map((stroke, index) => (
        <g key={index} fill="none" stroke={stroke.color} strokeWidth={stroke.width} strokeDasharray={stroke.dash} strokeLinejoin="round">
          {TILES.map((tile) => (
            <g key={tile.id} transform={tile.transform}>
              {(tile[stroke.layer] || []).map((d) => (
                <path key={d} d={d} vectorEffect="non-scaling-stroke" />
              ))}
            </g>
          ))}
        </g>
      ))}

      {SHIELDS.map((shield) => (
        <g key={shield.name}>
          <rect x={shield.x} y={shield.y} width="94" height="54" rx="3" fill="#fdfdf8" stroke="#8a8a8a" strokeWidth="4" />
          <text x={shield.x + 9} y={shield.y + 35} fontSize="34" fontWeight="700" fill="#444444">
            {shield.name}
          </text>
        </g>
      ))}
      <rect x="2833" y="1272" width="78" height="54" rx="2" fill="#8fca68" stroke="#5cb030" strokeWidth="3" />
      <text x="2841" y="1308" fontSize="34" fontWeight="700" fill="#ffffff">
        E18
      </text>

      <g stroke="#ffffff" strokeWidth="9" strokeLinejoin="round" paintOrder="stroke">
        {PLACES.map((place) => (
          <text key={place.name} x={place.x} y={place.y} fontSize={place.size} fill={place.color || '#2b2b2b'}>
            {place.name}
          </text>
        ))}
        <text x="1489" y="1489" fontSize="38" fontWeight="700" fill="#757575" className="tracking-[10px]">
          Bergsåsen
        </text>
      </g>
      <text
        transform="translate(2480 1133) rotate(-47)"
        fontSize="34"
        fill="#b07f52"
        stroke="#f1e8c9"
        strokeWidth="7"
        paintOrder="stroke"
      >
        200
      </text>
    </svg>
  );
}

function BasemapIcon() {
  return (
    <svg viewBox="305 172 232 232" className="size-[78px]" aria-hidden="true">
      <clipPath id="basemap">
        <rect x="305" y="172" width="232" height="232" rx="18" />
      </clipPath>
      <g clipPath="url(#basemap)">
        <rect x="305" y="172" width="232" height="232" fill="#326fc2" />
        <g fill="none" stroke="#ffffff" strokeWidth="15">
          <path d="M354 165 V300" strokeWidth="13" />
          <path d="M295 252 L460 415" strokeWidth="18" />
          <path d="M355 412 L545 222" strokeWidth="17" />
          <path d="M488 268 L545 328" />
        </g>
        <path d="M438 345 L400 268 A46 46 0 1 1 478 268 Z" fill="#326fc2" stroke="#ffffff" strokeWidth="10" />
        <circle cx="438" cy="244" r="20" fill="#ffffff" />
      </g>
    </svg>
  );
}

function LegendIcon() {
  return (
    <svg viewBox="304 704 232 232" className="size-[78px]" fill="#326fc2" aria-hidden="true">
      <circle cx="347" cy="747" r="25" />
      <rect x="328" y="795" width="38" height="40" fill="none" stroke="#326fc2" strokeWidth="10" />
      <path d="M349 858 L376 885 349 912 322 885Z" />
      <rect x="389" y="740" width="72" height="21" rx="3" />
      <rect x="389" y="809" width="129" height="21" rx="3" />
      <rect x="389" y="877" width="92" height="21" rx="3" />
    </svg>
  );
}

function LayersIcon() {
  return (
    <svg viewBox="304 1234 232 232" className="size-[78px]" fill="#326fc2" aria-hidden="true">
      <path d="M420 1234 L534 1293 420 1350 306 1293Z" />
      <path d="M350 1326 L420 1361 490 1326 536 1350 420 1409 304 1350Z" />
      <path d="M350 1385 L420 1420 490 1385 536 1409 420 1467 304 1409Z" />
    </svg>
  );
}

function LayerToolsIcon() {
  return (
    <svg viewBox="64 55 232 232" className="size-[78px] overflow-visible" fill="#326fc2" aria-hidden="true">
      <path d="M170 63 L266 112 170 163 74 112Z" />
      <path d="M110 141 L170 173 228 142 266 161 218 187 196 180 182 190 176 209 72 161Z" />
      <path d="M110 188 L176 219 176 260 72 209Z" />
      <path d="M191 194 h16 v58 h-16z M231 222 h16 v66 h-16z M270 194 h17 v58 h-17z" />
      <g fill="#ffffff" stroke="#326fc2" strokeWidth="8">
        <circle cx="199" cy="268" r="14" />
        <circle cx="239" cy="210" r="14" />
        <circle cx="278" cy="268" r="14" />
      </g>
    </svg>
  );
}

function MapSelectIcon() {
  return (
    <svg viewBox="64 587 232 232" className="size-[78px]" fill="#326fc2" aria-hidden="true">
      <path d="M64 587 h58 v18 h-39 v38 h-19z M296 587 v56 h-19 v-38 h-38 v-18z M64 819 v-57 h19 v38 h39 v19z M296 819 h-57 v-19 h38 v-38 h19z" />
      <path d="M140 587 h33 v9 h-33z M188 587 h33 v9 h-33z M140 810 h33 v9 h-33z M188 810 h33 v9 h-33z" />
      <path d="M64 662 h9 v34 h-9z M64 709 h9 v34 h-9z M287 662 h9 v34 h-9z M287 709 h9 v34 h-9z" />
      <path d="M101 624 h44 l34 36 -78 76z" />
      <path d="M174 624 h44 l-22 20z" />
      <path d="M248 624 h12 v84 l-51 -46z" />
      <path d="M194 679 L260 740 V782 H214 L154 717Z" />
      <path d="M139 733 L192 782 H101 V770Z" />
    </svg>
  );
}

// Four symbol swatches: outline, hatched, grid and solid
function PlanIcon() {
  return (
    <svg viewBox="0 0 86 86" className="size-[86px] shrink-0" fill="none" stroke="#575757" aria-hidden="true">
      <rect x="4" y="4" width="32" height="32" strokeWidth="8" />
      <rect x="48" y="1" width="37" height="38" strokeWidth="3" />
      <path d="M47 21 L67 1 M47 30 L76 1 M49 37 L85 1 M56 39 L86 9 M65 39 L86 18 M74 39 L86 27" strokeWidth="3" />
      <rect x="0" y="46" width="40" height="40" fill="#575757" stroke="none" />
      <path d="M14 50 V82 M26 50 V82 M4 60 H36 M4 72 H36" stroke="#ffffff" strokeWidth="3" strokeDasharray="9 3" />
      <rect x="46" y="46" width="40" height="40" fill="#575757" stroke="none" />
    </svg>
  );
}

function Logo() {
  return (
    <svg viewBox="0 0 140 140" className="size-[140px] shrink-0" aria-hidden="true">
      <clipPath id="planet">
        <circle cx="70" cy="70" r="70" />
      </clipPath>
      <g clipPath="url(#planet)">
        <rect width="140" height="140" fill="#f57848" />
        <rect width="140" height="16" fill="#bbaba4" />
        <path d="M0 72 C14 66 28 70 40 82 C52 94 60 101 78 99 C92 98 96 90 110 92 C122 93 126 100 132 108 L140 140 H0Z" fill="#9d8b82" />
        <rect y="128" width="140" height="12" fill="#bbaba4" />
      </g>
    </svg>
  );
}

const TOOLS = [
  { label: 'Bakgrunnskart', Icon: BasemapIcon },
  { label: 'Tegnforklaring', Icon: LegendIcon },
  { label: 'Kartlag', Icon: LayersIcon },
  { label: 'Kartfavoritter', Icon: LayerToolsIcon, highlighted: true },
  { label: 'Velg i kart', Icon: MapSelectIcon },
];

function FavoritesPanel({ selected, onSelect }) {
  const favorites = ['Reguleringsplan', 'Byggesak'];

  return (
    <aside className="w-1/2 shrink-0 border-r-[14px] border-[#a0a0a0] bg-white">
      <div className="flex h-[155px]" role="tablist">
        <button
          role="tab"
          aria-selected="true"
          className="w-[408px] border-t-[15px] border-r-2 border-t-[#3270c2] border-r-[#a0a0a0] pb-3 pl-10 text-left text-[50px] text-[#3270c2]"
        >
          Kartfavoritter
        </button>
        <div className="flex-1 border-b-3 border-[#a0a0a0]" />
      </div>
      <div className="flex h-[146px] items-start justify-end px-9 pt-9">
        <button aria-label="Lukk">
          <svg viewBox="0 0 40 40" className="size-10" stroke="#2f2f2f" strokeWidth="5" aria-hidden="true">
            <path d="M1 1 L39 39 M39 1 L1 39" />
          </svg>
        </button>
      </div>
      <ul>
        {favorites.map((name) => (
          <li key={name}>
            <button
              onClick={() => onSelect(name)}
              className={`flex h-[186px] w-full items-center gap-16 pl-[57px] text-left text-[52px] font-semibold text-[#333333] ${
                selected === name ? 'bg-linear-to-r from-[#eaeaea] to-white' : ''
              }`}
            >
              <PlanIcon />
              {name}
            </button>
          </li>
        ))}
      </ul>
    </aside>
  );
}

function SearchBar() {
  const [query, setQuery] = useState('');

  return (
    <form
      className="flex h-[124px] w-[1164px] max-w-full bg-white text-[#6b6b6b] shadow-[0_4px_10px_rgba(0,0,0,0.35)]"
      onSubmit={(e) => e.preventDefault()}
    >
      <button type="button" aria-label="Velg søk" className="flex w-[123px] items-center justify-center border-r-2 border-[#d0d0d0]">
        <svg viewBox="0 0 48 28" className="mt-2 h-7 w-12" fill="none" stroke="#6b6b6b" strokeWidth="4" aria-hidden="true">
          <path d="M4 3 H44 L24 25Z" />
        </svg>
      </button>
      <input
        aria-label="Find address or place"
        placeholder="Find address or place"
        value={query}
        onChange={(e) => setQuery(e.target.value)}
        className="min-w-0 flex-1 px-7 pb-2 font-['Liberation_Sans',Arial,sans-serif] text-[54px] outline-none placeholder:text-[#6e6e6e]"
      />
      <button aria-label="Søk" className="flex w-[123px] items-center justify-center border-l-2 border-[#d0d0d0]">
        <svg viewBox="0 0 60 60" className="size-[60px]" fill="none" stroke="#5e6166" strokeWidth="4" aria-hidden="true">
          <circle cx="22" cy="22" r="20" />
          <path d="M37 37 L59 59" />
        </svg>
      </button>
    </form>
  );
}

function App() {
  const [selected, setSelected] = useState('Byggesak');

  return (
    <div className="flex min-h-screen flex-col border-[3px] border-[#858585] bg-[#3b3b3b] pt-[7px] font-['Open_Sans','Noto_Sans',sans-serif]">
      <header className="flex h-[196px] items-center rounded-tl-3xl bg-[#133963] pl-5 text-[62px] text-white">
        <Logo />
        <h1 className="ml-[86px] pt-4 font-bold">Origo - Innsyn saksbehandler</h1>
        <p className="ml-[184px] pt-4">Mars kommune</p>
      </header>

      <main className="flex flex-1">
        <FavoritesPanel selected={selected} onSelect={setSelected} />
        <section className="relative flex-1 border-t-[6px] border-l-[6px] border-[#2a72c3]">
          <MapCanvas />
          <div className="relative p-14">
            <SearchBar />
            <div className="mt-[31px] flex w-[146px] flex-col gap-[31px]">
              {TOOLS.map(({ label, Icon, highlighted }) => (
                <button
                  key={label}
                  aria-label={label}
                  className={`flex size-[146px] items-center justify-center rounded-full bg-white ${
                    highlighted
                      ? 'outline-10 outline-offset-[11px] outline-[#ffc000] shadow-[0_0_0_12px_rgba(80,100,60,0.3),8px_12px_20px_14px_rgba(0,0,0,0.2)]'
                      : 'shadow-[0_6px_14px_rgba(0,0,0,0.4)]'
                  }`}
                >
                  <Icon />
                </button>
              ))}
            </div>
          </div>
        </section>
      </main>
    </div>
  );
}

export default App;
